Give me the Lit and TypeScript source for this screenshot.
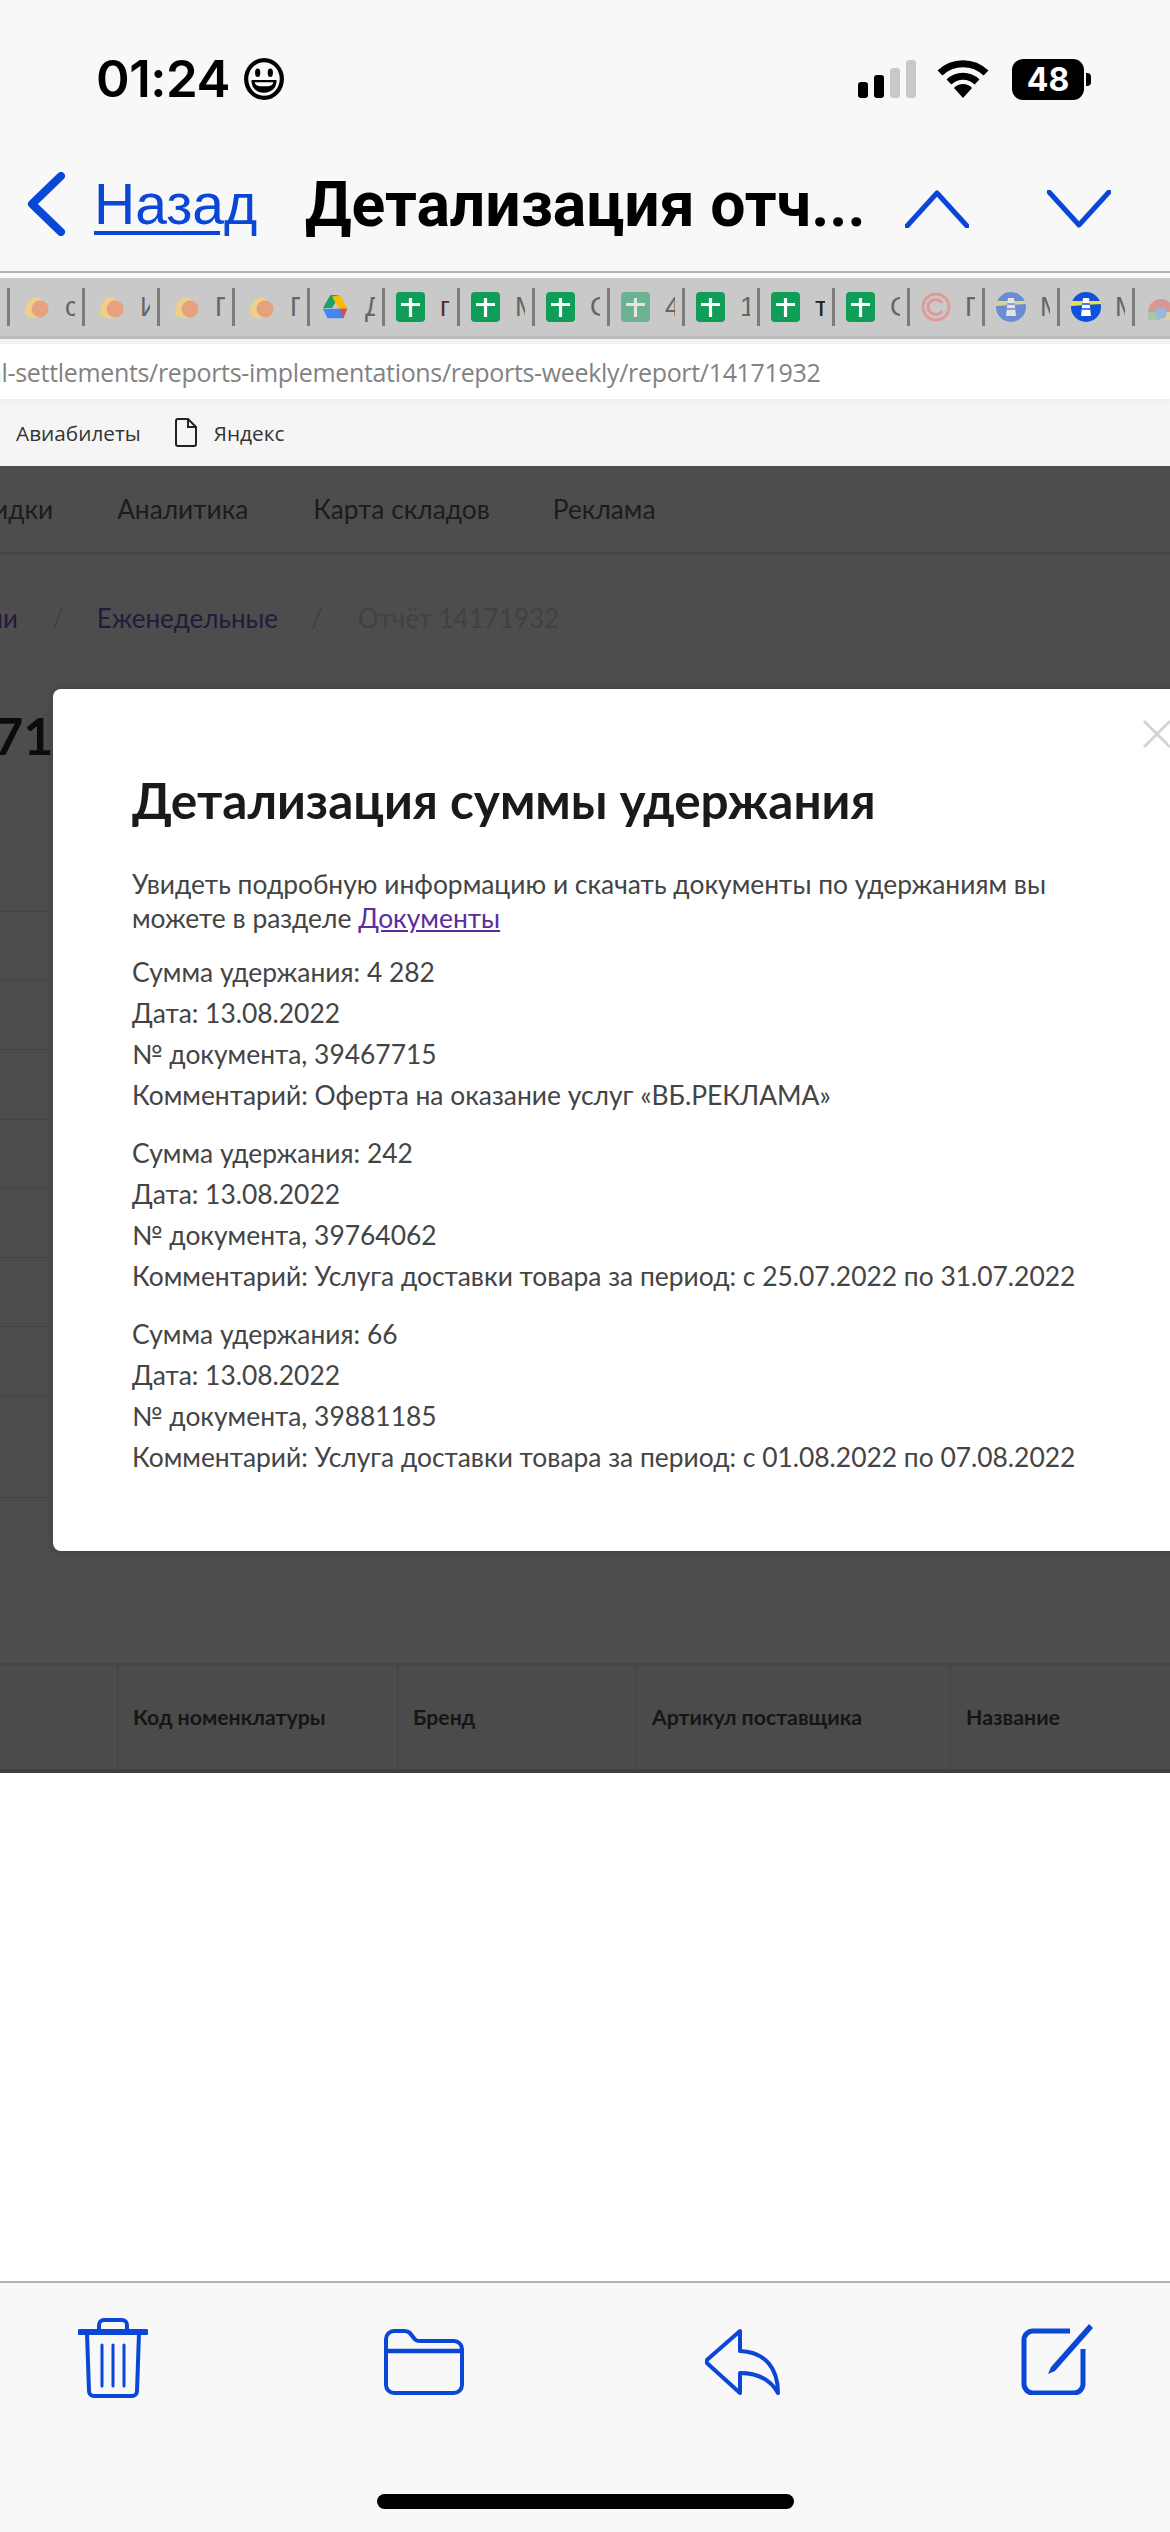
import { LitElement, html, css, svg } from "lit";
import { customElement } from "lit/decorators.js";

const BLUE = "#0a47d6";

const flame = svg`<svg width="26" height="24" viewBox="0 0 26 24" style="margin-left:3px"><path d="M1 17C1 10 6 2 12 2c4 0 6 3 6 6v14c-3 1-6 1-9 1-5 0-8-2-8-6z" fill="#eed08a"/><circle cx="16" cy="14" r="8.500" fill="#e6a27e"/></svg>`;
const drive = svg`<svg width="28" height="26" viewBox="0 0 30 28"><path d="M10 1h10L12 15H2z" fill="#1ea362"/><path d="M20 1l9 15H19L12 3z" fill="#ffba00"/><path d="M2 16l5 10h17l4-10z" fill="#4285f4"/><path d="M24 26l4-10h-8z" fill="#d9503f"/></svg>`;
const plus = (o = 1) => svg`<svg width="29" height="30" viewBox="0 0 29 30" style=${`opacity:${o}`}><rect width="29" height="30" rx="4" fill="#109d58"/><path d="M14.5 6v19M5 12.5h19" stroke="#fff" stroke-width="3.2"/></svg>`;
const copy = svg`<svg width="30" height="30" viewBox="0 0 30 30" fill="none" stroke="#e09a98"><circle cx="15" cy="15" r="13" stroke-width="3"/><path d="M21 11a7.5 7.5 0 1 0 0 8" stroke-width="3"/></svg>`;
const light = (o = 1) => svg`<svg width="30" height="30" viewBox="0 0 30 30" style=${`opacity:${o}`}><circle cx="15" cy="15" r="15" fill="#0f50dc"/><path d="M0 9l30 0v3l-30 2z" fill="#f2dc4a"/><path d="M12 6h6l2 18h-10z" fill="#fff"/><path d="M11 12h8M10.500 17h9" stroke="#0f50dc" stroke-width="1.500"/></svg>`;
const chrome = svg`<svg width="30" height="30" viewBox="0 0 30 30" style="opacity:.55"><path d="M2 20a13 13 0 0 1 26 0z" fill="#e2716a"/><path d="M2 20h12v8H2z" fill="#8fc48f"/><path d="M14 20h14v8H14z" fill="#f0d68a"/><circle cx="15" cy="21" r="6" fill="#7aa7ec"/></svg>`;

interface Tab { icon: unknown; label: string; color?: string }
const tabs: Tab[] = [
  { icon: flame, label: "с" }, { icon: flame, label: "И" }, { icon: flame, label: "Г" }, { icon: flame, label: "Г" },
  { icon: drive, label: "Д" }, { icon: plus(), label: "г", color: "#5a2a2a" }, { icon: plus(), label: "М" }, { icon: plus(), label: "С" },
  { icon: plus(0.5), label: "4" }, { icon: plus(), label: "1" }, { icon: plus(), label: "т", color: "#222" }, { icon: plus(), label: "С" },
  { icon: copy, label: "Г" }, { icon: light(0.5), label: "М" }, { icon: light(), label: "М" }, { icon: chrome, label: "" },
];

const groups = [
  ["4 282", "39467715", "Оферта на оказание услуг «ВБ.РЕКЛАМА»"],
  ["242", "39764062", "Услуга доставки товара за период: с 25.07.2022 по 31.07.2022"],
  ["66", "39881185", "Услуга доставки товара за период: с 01.08.2022 по 07.08.2022"],
];

@customElement("app-root")
export class AppRoot extends LitElement {
  static styles = css`
    :host { display: block; width: 1170px; height: 2532px; background: #fff; overflow: hidden; font-family: "Lato", "Open Sans", sans-serif; }
    .page { display: flex; flex-direction: column; height: 2532px; background: #f8f8f8; }
    .top { background: #f8f8f8; height: 273px; flex: none; box-sizing: border-box; border-bottom: 2px solid #b4b4b4; font-family: Inter, "Liberation Sans", sans-serif; }
    .status { height: 156px; box-sizing: border-box; padding: 55px 79px 0 96px; display: flex; justify-content: space-between; align-items: flex-start; }
    .time { display: flex; align-items: center; gap: 13px; font-size: 51px; font-weight: 600; line-height: 48px; letter-spacing: -.5px; color: #000; }
    .sys { display: flex; align-items: center; gap: 21px; height: 48px; }
    .battery { display: flex; align-items: center; gap: 2px; margin-left: 2px; }
    .bat { width: 72px; height: 41px; border-radius: 11px; background: #000; color: #fff; font-size: 32px; font-weight: 700; display: flex; align-items: center; justify-content: center; }
    .nub { width: 5px; height: 13px; background: #000; border-radius: 0 4px 4px 0; }
    .nav { display: flex; align-items: center; height: 96px; padding-left: 27px; position: relative; }
    .back { font-family: "Liberation Sans", sans-serif; font-size: 57px; color: #0a47d6; margin-left: 29px; position: relative; width: 162px; white-space: nowrap; line-height: 66px; }
    .back i { position: absolute; left: 0; width: 126px; height: 4px; top: 60px; background: #0a47d6; }
    .title { font-family: Roboto, "Liberation Sans", sans-serif; font-weight: 700; font-size: 62.500px; color: #000; margin-left: 49px; width: 600px; white-space: nowrap; }
    .arrows { display: flex; gap: 78px; margin-top: 9px; }
    .tabs { margin-top: 5px; height: 58px; flex: none; background: #c9c9c9; display: flex; align-items: center; padding-left: 7px; overflow: hidden; border-bottom: 3px solid #bdbdbd; box-sizing: content-box; }
    .first { flex: none; width: 3px; height: 38px; background: #7c7c7c; }
    .tab { flex: none; width: 75px; height: 38px; box-sizing: border-box; border-right: 3px solid #7c7c7c; display: flex; align-items: center; padding-left: 11px; position: relative; font-family: "Liberation Sans", sans-serif; font-size: 27px; color: #666; }
    .tab svg { filter: blur(.5px); }
    .tab span { position: absolute; left: 55px; top: 4px; width: 10px; overflow: hidden; }
    .gap { height: 5px; background: #f2f2f2; flex: none; }
    .url { height: 55px; background: #fff; flex: none; display: flex; align-items: center; font-size: 25px; color: #828282; white-space: nowrap; box-shadow: 0 2px 4px rgba(0,0,0,.04); position: relative; font-family: "Open Sans", sans-serif; letter-spacing: -.33px; }
    .url span { margin-left: -12px; }
    .marks { height: 67px; background: #f5f5f5; flex: none; display: flex; align-items: center; padding-left: 16px; font-size: 20.800px; color: #333; font-family: "Open Sans", sans-serif; }
    .marks svg { margin-left: 33px; margin-right: 16px; }
    .dim { flex: none; height: 1307px; background: #4d4d4d; position: relative; overflow: hidden; display: flex; flex-direction: column; }
    .menu { height: 88px; flex: none; box-sizing: border-box; border-bottom: 2px solid #454545; display: flex; align-items: center; font-size: 26.300px; color: #1c1c1c; white-space: nowrap; }
    .menu span { flex: none; }
    .crumbs { height: 128px; flex: none; display: flex; align-items: center; font-size: 26px; white-space: nowrap; }
    .c1 { color: #241a3c; }
    .c2 { color: #414141; }
    .heading { font-size: 52px; font-weight: 700; color: #0c0c0c; height: 106px; line-height: 106px; margin-left: -37px; flex: none; white-space: nowrap; }
    .rows { flex: none; display: flex; flex-direction: column; }
    .rows div { flex: none; width: 50px; box-sizing: border-box; border-bottom: 1px solid #444; height: 69.2px; }
    .rows div:first-child { height: 124px; }
    .rows div:last-child { height: 102px; }
    .spacer { flex: 1; }
    .thead { flex: none; height: 110px; box-sizing: border-box; border-top: 2px solid #454545; border-bottom: 4px solid #3f3f3f; display: grid; grid-template-columns: 117px 280px 239px 314px 1fr; font-size: 21.300px; font-weight: 700; color: #151515; background: #4b4b4b; }
    .thead div { display: flex; align-items: center; padding-left: 15px; box-sizing: border-box; border-left: 1px solid #424242; white-space: nowrap; }
    .thead div:first-child { border: 0; }
    .modal { position: absolute; left: 53px; top: 223px; width: 1200px; height: 862px; background: #fff; border-radius: 8px; box-sizing: border-box; padding: 81px 0 0 79px; color: #444; font-size: 26.400px; box-shadow: 0 0 10px rgba(0,0,0,.18); }
    .x { position: absolute; left: 1089px; top: 30px; }
    h1 { margin: 0 0 37px; font-size: 49.500px; line-height: 60px; font-weight: 700; color: #1a1a1a; white-space: nowrap; }
    .intro { line-height: 34px; margin-bottom: 17px; }
    .intro a { color: #5b2e9d; text-decoration: underline; }
    .group { line-height: 41px; margin-bottom: 17px; white-space: nowrap; }
    .blank { flex: 1; background: #fff; }
    .bottom { flex: none; height: 251px; background: #f8f8f9; border-top: 2px solid #b4b4b4; box-sizing: border-box; position: relative; }
    .tools { display: flex; justify-content: space-between; align-items: flex-end; padding: 0 77px 0 78px; height: 115px; }
    .tools svg.up { margin-bottom: 3px; }
    .home { position: absolute; left: 377px; top: 211px; width: 417px; height: 15px; background: #000; border-radius: 8px; }
  `;

  render() {
    return html`<div class="page">
      <div class="top">
        <div class="status">
          <div class="time">01:24
            <svg width="42" height="42" viewBox="0 0 38 40" fill="none"><ellipse cx="19" cy="20" rx="17" ry="18" stroke="#000" stroke-width="4"/><ellipse cx="13" cy="14" rx="2.500" ry="4" fill="#000"/><ellipse cx="25" cy="14" rx="2.500" ry="4" fill="#000"/><path d="M7 21h24c0 8-5 12-12 12S7 29 7 21z" fill="#000"/><path d="M10 23h18c-1 3-3 4-9 4s-8-1-9-4z" fill="#fff"/></svg>
          </div>
          <div class="sys">
            <svg width="58" height="38" viewBox="0 0 58 38"><rect x="0" y="22" width="10" height="16" rx="3" fill="#000"/><rect x="16" y="15" width="10" height="23" rx="3" fill="#000"/><rect x="32" y="8" width="10" height="30" rx="3" fill="#c8c8c8"/><rect x="48" y="0" width="10" height="38" rx="3" fill="#c8c8c8"/></svg>
            <svg width="52" height="38" viewBox="0 0 52 38" fill="none" stroke="#000" stroke-width="7"><path d="M3 13a33 33 0 0 1 46 0"/><path d="M12 22a20 20 0 0 1 28 0"/><path d="M17 28l9 10 9-10a12 12 0 0 0-18 0z" fill="#000" stroke="none"/></svg>
            <div class="battery"><div class="bat">48</div><div class="nub"></div></div>
          </div>
        </div>
        <div class="nav">
          <svg width="38" height="64" viewBox="0 0 38 64" fill="none" stroke=${BLUE} stroke-width="8" stroke-linecap="round" stroke-linejoin="round"><path d="M34 4L5 32l29 28"/></svg>
          <div class="back">Назад<i></i></div>
          <div class="title">Детализация отч...</div>
          <div class="arrows">
            <svg width="64" height="38" viewBox="0 0 64 38" fill="none" stroke=${BLUE} stroke-width="5" stroke-linecap="round" stroke-linejoin="round"><path d="M2 36L32 3l30 33"/></svg>
            <svg width="64" height="38" viewBox="0 0 64 38" fill="none" stroke=${BLUE} stroke-width="5" stroke-linecap="round" stroke-linejoin="round"><path d="M2 2l30 33L62 2"/></svg>
          </div>
        </div>
      </div>
      <div class="tabs"><div class="first"></div>${tabs.map((t) => html`<div class="tab">${t.icon}<span style=${t.color ? `color:${t.color}` : ""}>${t.label}</span></div>`)}</div>
      <div class="gap"></div>
      <div class="url"><span>al-settlements/reports-implementations/reports-weekly/report/14171932</span></div>
      <div class="marks">Авиабилеты
        <svg width="24" height="29" viewBox="0 0 24 29" fill="none" stroke="#222" stroke-width="2"><path d="M2 3a2 2 0 0 1 2-2h10l8 8v17a2 2 0 0 1-2 2H4a2 2 0 0 1-2-2z"/><path d="M14 1v8h8"/></svg>
        Яндекс</div>
      <div class="dim">
        <div class="menu">
          <span style="margin-left:-7px">идки</span><span style="margin-left:64px">Аналитика</span><span style="margin-left:65px">Карта складов</span><span style="margin-left:63px">Реклама</span>
        </div>
        <div class="crumbs">
          <span class="c1" style="margin-left:-12px">ии</span><span class="c2" style="margin-left:34px">/</span><span class="c1" style="margin-left:33px">Еженедельные</span><span class="c2" style="margin-left:33px">/</span><span class="c2" style="margin-left:35px">Отчёт 14171932</span>
        </div>
        <div class="heading">171</div>
        <div class="rows"><div></div><div></div><div></div><div></div><div></div><div></div><div></div><div></div><div></div></div>
        <div class="spacer"></div>
        <div class="thead"><div></div><div>Код номенклатуры</div><div>Бренд</div><div>Артикул поставщика</div><div>Название</div></div>
        <div class="modal">
          <svg class="x" width="30" height="30" viewBox="0 0 30 30" stroke="#d4d4d4" stroke-width="3"><path d="M2 2l26 26M28 2L2 28"/></svg>
          <h1>Детализация суммы удержания</h1>
          <div class="intro">Увидеть подробную информацию и скачать документы по удержаниям вы<br>можете в разделе <a>Документы</a></div>
          ${groups.map((g) => html`<div class="group">Сумма удержания: ${g[0]}<br>Дата: 13.08.2022<br>№ документа, ${g[1]}<br>Комментарий: ${g[2]}</div>`)}
        </div>
      </div>
      <div class="blank"></div>
      <div class="bottom">
        <div class="tools">
          <svg width="70" height="80" viewBox="0 0 70 80" fill="none" stroke=${BLUE} stroke-width="4"><path d="M2 14h66" stroke-width="6" stroke-linecap="round"/><path d="M21 13V7a5 5 0 0 1 5-5h18a5 5 0 0 1 5 5v6"/><path d="M9 15l2 58a5 5 0 0 0 5 5h38a5 5 0 0 0 5-5l2-58"/><path d="M24 27v41M35 27v41M46 27v41" stroke-width="3" stroke-linecap="round"/></svg>
          <svg class="up" width="80" height="66" viewBox="0 0 80 66" fill="none" stroke=${BLUE} stroke-width="4" style="margin-left:-4px"><path d="M2 10a8 8 0 0 1 8-8h10c5 0 6 2 9 6s4 4 8 4h33a8 8 0 0 1 8 8v36a8 8 0 0 1-8 8H10a8 8 0 0 1-8-8z"/><path d="M2 22h76" stroke-width="4.500"/></svg>
          <svg class="up" width="76" height="66" viewBox="0 0 76 66" fill="none" stroke=${BLUE} stroke-width="4" stroke-linejoin="round"><path d="M35 2L3 30a3 3 0 0 0 0 5l32 29V44c18 0 30 6 38 20 0-24-12-41-38-42z"/></svg>
          <svg class="up" width="72" height="72" viewBox="0 0 72 72" fill="none" stroke=${BLUE} stroke-width="5"><path d="M49 8H12a9 9 0 0 0-9 9v44a9 9 0 0 0 9 9h41a9 9 0 0 0 9-9V26"/><path d="M68 1L30 44l-3 7 7-3L72 5z" fill=${BLUE} stroke="none"/></svg>
        </div>
        <div class="home"></div>
      </div>
    </div>`;
  }
}
